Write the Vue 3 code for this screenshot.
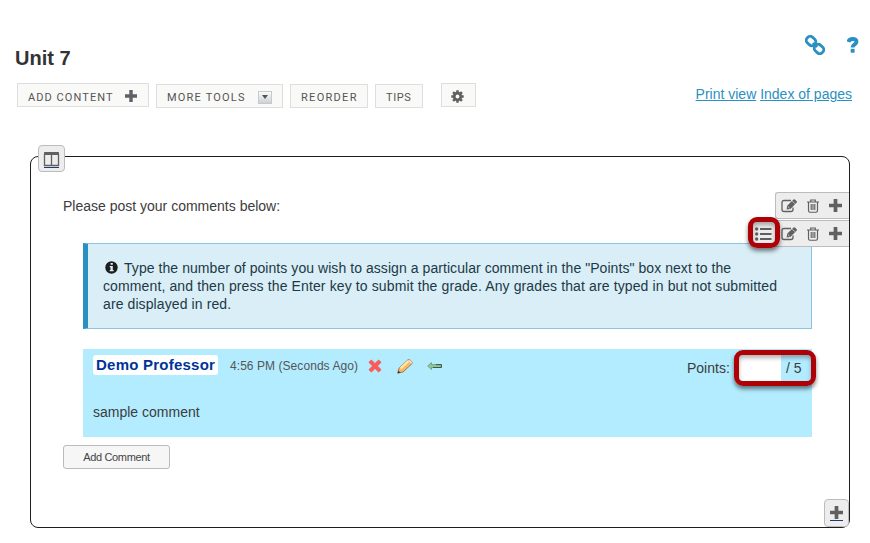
<script setup>
const icons = {
  plus: 'M5 0h4v5h5v4H9v5H5V9H0V5h5z',
}
const strips = [{ list: false }, { list: true }]
</script>

<template>
  <main class="page">
    <header class="head">
      <h1>Unit 7</h1>
      <nav class="help">
        <svg class="link-icon" viewBox="0 0 20 20">
          <g fill="none" stroke="#2a90c2" stroke-width="2.8">
            <rect x="1.2" y="2.2" width="9.6" height="7.6" rx="3.2" transform="rotate(43 6 6)" />
            <rect x="9.2" y="10.2" width="9.6" height="7.6" rx="3.2" transform="rotate(43 14 14)" />
            <path d="M7.8 8l4.4 4" stroke-width="2" />
          </g>
        </svg>
        <svg class="question" viewBox="0 0 12 16">
          <path d="M1.3 5C2 2.800 3.400 2 5.500 2c2.500 0 4 1 4 2.800 0 2.600-3.900 2.700-3.900 5.700" fill="none" stroke="#2a90c2" stroke-width="3.900" />
          <path d="M3.700 11.800h3.900v3.900H3.700z" fill="#2a90c2" />
        </svg>
      </nav>
    </header>

    <div class="toolbar">
      <button class="tool add">ADD CONTENT
        <svg class="p12" viewBox="0 0 14 14"><path :d="icons.plus" fill="#625f66" /></svg>
      </button>
      <button class="tool more">MORE TOOLS<span class="drop"><i></i></span></button>
      <button class="tool reorder">REORDER</button>
      <button class="tool tips">TIPS</button>
      <button class="tool gear">
        <svg width="13" height="13" viewBox="0 0 14 14">
          <circle cx="7" cy="7" r="3.6" fill="none" stroke="#606060" stroke-width="3" />
          <g stroke="#606060" stroke-width="2.7">
            <path d="M7 .3v2.4M7 11.3v2.4M.3 7h2.4M11.3 7h2.4M2.2 2.2L4 4M10 10l1.8 1.8M11.8 2.2L10 4M4 10l-1.8 1.8" />
          </g>
        </svg>
      </button>
      <div class="links"><a>Print view</a> <a>Index of pages</a></div>
    </div>

    <section class="panel">
      <span class="corner columns">
        <svg width="17" height="18" viewBox="0 0 17 18">
          <path d="M1.500 3v11.500h14V3M8.500 4v10" fill="none" stroke="#606060" stroke-width="1.3" />
          <path d="M1 1.500q0-.5.5-.5h14q.5 0 .5.5V4H1z" fill="#606060" />
          <path d="M1 16.500h15" stroke="#1c3c78" />
        </svg>
      </span>

      <div class="strips">
        <div v-for="(s, n) in strips" :key="n" class="strip" :class="{ wide: s.list }">
          <svg v-if="s.list" class="list" width="17" height="14" viewBox="0 0 17 14">
            <path d="M5 2h11.500M5 7h11.500M5 12h11.500" stroke="#606060" stroke-width="2" />
            <g fill="#606060">
              <circle cx="1.700" cy="2" r="1.700" /><circle cx="1.700" cy="7" r="1.700" /><circle cx="1.700" cy="12" r="1.700" />
            </g>
          </svg>
          <svg width="17" height="14" viewBox="0 0 17 14">
            <path d="M10 1.500H3Q1 1.500 1 3.500v7q0 2 2 2h7q2 0 2-2V8.500" fill="none" stroke="#606060" stroke-width="1.300" />
            <path d="M5.600 10.500l.6-3.800L12.500.5q.7-.6 1.400 0l1.800 1.700q.5.6 0 1.200L9.400 9.900z" fill="#606060" />
            <path d="M6.900 7.500l1.700 1.700M11.400 2.200l2.400 2.400" stroke="#ededed" stroke-width=".8" />
          </svg>
          <svg width="12" height="14" viewBox="0 0 12 14">
            <path d="M0 3h12M3.700 3V1h4.600v2M1.500 3v8.500q0 1.700 1.500 1.700h6q1.500 0 1.500-1.700V3M4.200 5v6M6 5v6M7.800 5v6" fill="none" stroke="#606060" stroke-width="1.150" />
          </svg>
          <svg class="p13" viewBox="0 0 14 14"><path :d="icons.plus" fill="#606060" /></svg>
        </div>
        <span class="ring list-ring"></span>
      </div>

      <p class="prompt">Please post your comments below:</p>

      <div class="notice">
        <svg width="13" height="13" viewBox="0 0 13 13">
          <circle cx="6.500" cy="6.500" r="6.200" fill="#1d1d1d" />
          <path d="M5.600 2h2.200v1.800H5.600zM4.700 5h3.100v4h.8v1.300H4.700V9h.8V6.300h-.8z" fill="#d9eef6" />
        </svg>
        <span class="l1">Type the number of points you wish to assign a particular comment in the "Points" box next to the</span><br>
        <span class="l2">comment, and then press the Enter key to submit the grade. Any grades that are typed in but not submitted</span><br>
        <span class="l3">are displayed in red.</span>
      </div>

      <article class="comment">
        <div class="meta">
          <strong>Demo Professor</strong>
          <time>4:56 PM (Seconds Ago)</time>
          <svg class="cross" width="14" height="14" viewBox="0 0 14 14">
            <path d="M2 2l10 10M12 2L2 12" stroke="#e66b72" stroke-width="4.200" />
            <path d="M2 2l10 10M12 2L2 12" stroke="#ff5a58" stroke-width="3" />
          </svg>
          <svg class="pencil" width="16" height="15" viewBox="0 0 16 15">
            <path d="M.8 14l1.200-4.800L10.800.9q1.300-.7 2.900.6t1.500 2.900L6 13z" fill="#f5b969" stroke="#a9764d" />
            <path d="M3.500 9.600l7.700-7.500" stroke="#ffe7ac" stroke-width="2.200" />
            <path d="M10.800 1.600l3.500 3.200.7-.8q0-1.500-1.200-2.200t-2.200-.7z" fill="#f9ddd0" />
            <path d="M.5 14.500l.8-3.100 2.400 2.300z" fill="#483e3b" />
          </svg>
          <svg class="arrow" width="15" height="8" viewBox="0 0 15 8">
            <path d="M.7 4L4.500.6v2h9.800v2.900H4.500v2z" fill="#91c69a" stroke="#74a58b" />
            <path d="M6 5.500h8.400V2.600H9" fill="none" stroke="#3f5751" />
          </svg>
          <div class="grade">
            <label>Points:</label><input type="text" aria-label="Points"><span>/ 5</span>
            <span class="ring grade-ring"></span>
          </div>
        </div>
        <p>sample comment</p>
      </article>

      <button class="add-comment">Add Comment</button>

      <span class="corner append">
        <svg class="p13" viewBox="0 0 14 14"><path :d="icons.plus" fill="#606060" /></svg>
      </span>
    </section>
  </main>
</template>

<style>
body { background: #fff; }
</style>

<style scoped>
* { box-sizing: border-box; }
.page { width: 870px; height: 543px; padding: 30px 20px 15px 15px; font: 14px/18px "Liberation Sans", Arial, sans-serif; color: #3c3c3c; overflow: hidden; }
svg { display: block; flex: none; }
.p12 { width: 12px; height: 12px; }
.p13 { width: 13px; height: 13px; }
.head { display: flex; justify-content: space-between; height: 53px; }
h1 { margin: 16px 0 0; font-size: 20px; line-height: 24px; color: #333; }
.help { display: flex; gap: 22px; padding: 5px 0 0; margin-right: -9px; }
.link-icon { width: 20px; height: 20px; }
.question { width: 12px; height: 16px; margin: 2px 0 0; }
.toolbar { display: flex; align-items: flex-start; padding-left: 2px; height: 73px; }
.tool { display: flex; align-items: center; height: 24px; margin: 1px 7px 0 0; padding: 1px 0 0 10px; border: 1px solid #dedede; background: #f9f9f8; color: #555; font: 11px/14px Roboto, sans-serif; letter-spacing: 1.2px; white-space: nowrap; }
.add { width: 132px; margin-top: 0; padding-top: 5px; letter-spacing: 1.07px; }
.add svg { margin: -5px 0 0 11px; position: relative; top: 1px; }
.more { width: 127px; padding-top: 3px; }
.drop { display: flex; justify-content: center; align-items: center; width: 14px; height: 13px; margin: -1px 0 0 12px; border: 1px solid #c5cacc; background: linear-gradient(#fafafa, #ccd2d4); }
.drop i { border: 3.5px solid transparent; border-top: 4px solid #555; border-bottom: 0; }
.reorder { width: 78px; padding-top: 4px; letter-spacing: 1.3px; }
.tips { width: 48px; padding-top: 4px; letter-spacing: .6px; }
.gear { width: 35px; margin: 0 0 0 11px; padding: 2px 0 0 9px; }
.links { margin: 2px -2px 0 auto; color: #2a90c2; white-space: nowrap; }
.links a { text-decoration: underline; }
.panel { position: relative; width: 820px; height: 372px; margin-left: 15px; padding: 40px 37px 0 32px; border: 1px solid #1d1d1d; border-radius: 8px; }
.corner { position: absolute; display: flex; justify-content: center; border: 1px solid #bcbcbc; border-radius: 4px; background: #ededed; }
.columns { left: 7px; top: -12px; width: 27px; height: 27px; padding-top: 5px; }
.append { right: 0; bottom: 0; width: 25px; height: 28px; padding-top: 6px; }
.append::after { content: ""; position: absolute; left: 5px; right: 5px; bottom: 5px; height: 1px; background: #1c3c78; }
.strips { position: absolute; right: 0; top: 35px; display: flex; flex-direction: column; align-items: flex-end; gap: 1px; z-index: 2; }
.strip { display: flex; align-items: center; width: 74px; height: 27px; padding-left: 5px; gap: 9px; border: 1px solid #bcbcbc; border-right: 0; border-radius: 3px 0 0 3px; background: #ededed; }
.strip .p13 { margin-left: 1px; }
.wide { width: 99px; padding-left: 4px; }
.wide .list { margin: 1px 0 0; }
.ring { position: absolute; border: 5px solid #ad0007; border-radius: 9px; box-shadow: 0 3px 4px rgba(0,0,0,.5), inset 0 3px 4px rgba(0,0,0,.3); }
.list-ring { right: 69px; top: 25px; width: 32px; height: 31px; }
.prompt { margin: 0 0 28px; line-height: 18px; }
.notice { width: 729px; height: 86px; margin-left: 20px; padding: 15px 0 0 15px; border: 1px solid #87c5e3; border-left: 5px solid #2a90c2; background: #d9eef6; color: #213947; white-space: nowrap; }
.notice svg { display: inline-block; vertical-align: -1px; margin: 0 6px 0 2px; }
.l1 { letter-spacing: .06px; }
.l2 { letter-spacing: .12px; }
.l3 { letter-spacing: .1px; }
.comment { width: 729px; height: 88px; margin: 20px 0 8px 20px; padding: 6px 10px 0; background: #b3ecff; }
.meta { position: relative; display: flex; align-items: center; height: 20px; }
strong { width: 125px; height: 20px; padding-left: 3px; border-radius: 3px; background: #fff; color: #003399; font-size: 15px; line-height: 20px; letter-spacing: .23px; white-space: nowrap; }
time { width: 129px; margin-left: 12px; padding-top: 2px; color: #555; font-size: 12px; letter-spacing: .06px; white-space: nowrap; }
.cross { margin: 2px 0 0 9px; }
.pencil { margin: 2px 0 0 15px; }
.arrow { margin: 2px 0 0 14px; }
.grade { display: flex; align-items: center; margin: 6px -4px 0 auto; }
.grade label { width: 51px; }
.grade input { width: 43px; height: 28px; padding: 0; border: 0; background: #fff; }
.grade span:not(.ring) { margin-left: 5px; width: 20px; }
.grade-ring { right: -14px; top: -5px; width: 82px; height: 36px; }
.comment p { margin: 28px 0 0; }
.add-comment { display: block; width: 107px; height: 24px; padding: 0; border: 1px solid #bbb; border-radius: 3px; background: #f6f6f6; color: #444; font: 11px/18px "Liberation Sans", Arial, sans-serif; letter-spacing: -.35px; }
</style>
